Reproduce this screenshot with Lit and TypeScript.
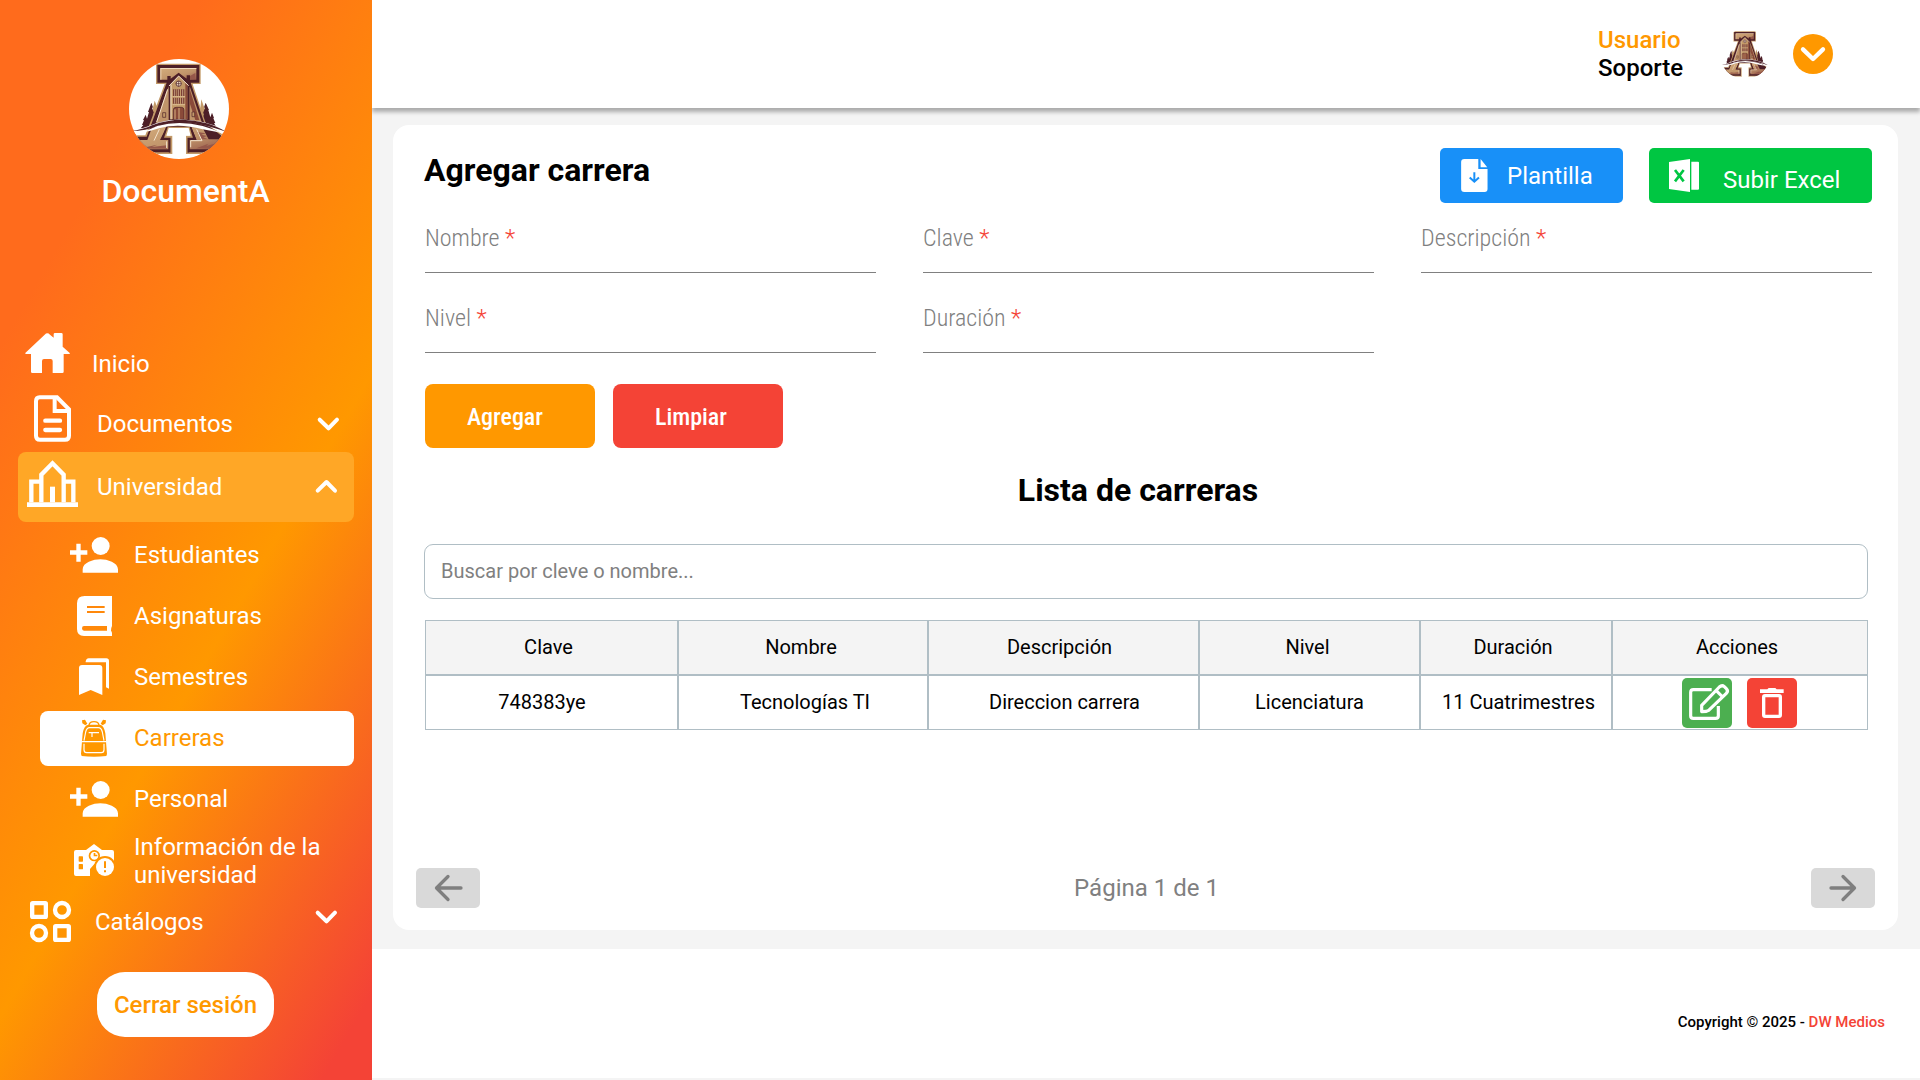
import { LitElement, html, css, svg } from "lit";
import { customElement } from "lit/decorators.js";

const house = svg`<svg class="ico" viewBox="54 78 216 165" width="72" height="55"><path fill="#fff" d="M75 130 134 74Q142 66 150 74L161 83V73q0-4 4-4h19q4 0 4 4V110L210 130q0 2-3 2H191V185q0 4-4 4H158V153q0-6-6-6h-20q-6 0-6 6V189H97q-4 0-4-4V132H78Z"/></svg>`;
const doc = svg`<svg class="ico" viewBox="54 261 216 165" width="72" height="55"><g fill="none" stroke="#fff" stroke-width="12"><path d="M119 262H171L207 298V377q0 12-12 12H120q-12 0-12-12V274q0-12 11-12Z"/><path d="M164 262V303H207"/><path stroke-width="13" stroke-linecap="round" d="M136 332H180M136 360H180"/></g></svg>`;
const campus = svg`<svg class="ico" viewBox="54 426 216 210" width="72" height="70"><g fill="none" stroke="#fff" stroke-width="13"><path d="M94 577V515H122M220 577V515H193M124 577V494L157.500 460 191 494V577"/><path stroke-width="15" d="M157.500 577V530"/><path stroke-width="14" d="M81 584H234"/></g></svg>`;
const catalog = svg`<svg class="ico" viewBox="54 387 216 198" width="72" height="66"><g fill="none" stroke="#fff" stroke-width="13"><rect x="96.500" y="429.500" width="41" height="41" rx="2"/><circle cx="186" cy="450" r="21"/><circle cx="117" cy="519" r="21"/><rect x="165.500" y="498.500" width="41" height="41" rx="2"/></g></svg>`;
const addUser = svg`<svg class="ico" viewBox="198 24 180 165" width="60" height="55"><g fill="#fff"><circle cx="302" cy="78" r="27"/><path d="M248 158V148C248 128 280 118 301 118S354 128 354 148V158ZM229 71h13v20h20v13h-20v21h-13v-21h-19v-13h19Z"/></g></svg>`;
const book = svg`<svg class="ico" viewBox="198 207 180 165" width="60" height="55"><path fill="#fff" fill-rule="evenodd" d="M254 228H336V318q-4 8-3 14q3 4 3 8v8H252q-21 0-21-21V250q0-22 23-22ZM261 258v6h53v-6ZM261 273v6h53v-6ZM321 318H252q-6 0-6 7t6 7H321Z"/></svg>`;
const bookmarks = svg`<svg class="ico" viewBox="198 390 180 165" width="60" height="55"><path fill="#fff" d="M237 444q0-9 9-9h52q9 0 9 9v81l-35-15-35 15ZM257 424q2-9 9-9h53q8 0 8 8v83l-9-4V427H257Z"/></svg>`;
const backpack = svg`<svg class="ico" viewBox="198 573 180 165" width="60" height="55"><path fill="#ff9800" d="M248 640q4-24 17-26h35q12 2 16 26l5 62-2 6q-37 5-74 0l-2-6ZM246 601l9-2 7 12-6 5-9-6ZM318 601l-9-2-7 12 6 5 9-6Z"/><path d="M267 616q1-11 15-11t15 11" fill="none" stroke="#ff9800" stroke-width="4"/><g fill="none" stroke="#fff" stroke-width="3.500"><path d="M252 662 257 636q3-13 12-13h26q9 0 12 13L312 662M246 665h72M252 671v18q0 9 8 9h44q8 0 8-9v-18M266 638h31M276 640v11"/></g></svg>`;
const schoolInfo = svg`<svg class="ico" viewBox="198 219 180 168" width="60" height="56"><mask id="m" maskUnits="userSpaceOnUse" x="215" y="245" width="135" height="110"><path fill="#fff" d="M228 270H258L282 252 306 270H336q6 0 6 6V348H228q-6 0-6-6V276q0-6 6-6Z"/><g fill="#000"><circle cx="283" cy="287" r="17"/><rect x="236" y="289" width="13" height="16" rx="2"/><rect x="236" y="312" width="13" height="16" rx="2"/><circle cx="315" cy="321" r="33"/><path d="M270 348V327L283 312H300V350ZM300 330H345V350H300Z"/></g><path fill="#fff" fill-rule="evenodd" d="M283 275a12 12 0 1 0 .1 0ZM281 279v10h11v-5h-6v-5Z"/><circle cx="315" cy="321" r="27" fill="#fff"/><path stroke="#000" stroke-width="6" d="M315 304V324M315 331V337"/></mask><rect x="215" y="245" width="135" height="110" fill="#fff" mask="url(#m)"/></svg>`;
const chevron = (up: boolean) => svg`<svg class="chev" viewBox="0 0 26 26" width="26" height="26"><path fill="none" stroke="#fff" stroke-width="4" stroke-linecap="round" stroke-linejoin="round" d="${up ? "M3.700 16.700 12.500 8 21 16.700" : "M3.700 8.700 12.500 17.300 21 8.700"}"/></svg>`;

const emblem = (size: number, disc: boolean) => svg`<svg class="emblem" viewBox="147 57 300 300" width=${size} height=${size}>
  <defs>
    <clipPath id="c${size}"><circle cx="297" cy="207" r="150"/></clipPath>
    <linearGradient id="g${size}" x1="0" x2="1" y1="0" y2="1"><stop offset="0" stop-color="#d4ac7c"/><stop offset=".6" stop-color="#c0946a"/><stop offset="1" stop-color="#96584a"/></linearGradient>
  </defs>
  <g clip-path="url(#c${size})">
    ${disc ? svg`<rect x="147" y="57" width="300" height="300" fill="#fff"/>` : ""}
    <g fill="#c39a69"><path d="M224 182l8 20 8 60h-22l-4-40ZM364 178l7 20 8 20v36h-24Z"/></g>
    <path fill="#4d1f27" d="M214 188l5 14-3 2 6 16-3 1 6 20-2 24H182l8-10-4 0 6-14-3-1 8-16 4 12 6-20-3 0ZM377 188l-5 14 3 2-6 16 3 1-6 20 4 22H410l-8-14 4 0-6-14 2-1-6-16-5 14-6-22 2 0Z"/>
    <path fill="#c39a69" d="M228 71H362V132H338L378 252 432 286V342H316V286H326L318 262H276L268 286H279V342H160V286H196L254 132H228Z"/>
    <path fill="#4d1f27" d="M232 75H358V128H332L372 246 428 290V337H320V290H332L322 262H272L262 290H275V337H166V290H200L260 128H232Z"/>
    <path fill="url(#g${size})" d="M241 84H349V119H241Z"/>
    <path fill="#f0d8b8" d="M241 84H349V87H244V119H241Z"/>
    <path fill="#96584a" d="M314 117l32-18v18ZM274 117l14-8 18 8Z"/>
    <path fill="#c0946a" d="M258 158 268 136V240L228 250ZM328 136 365 246 328 240Z"/>
    <path fill="#8a4a39" d="M330 150 358 240 346 240 330 192Z"/>
    <path fill="none" stroke="#f4e3cc" stroke-width="3" d="M263 148 230 246"/>
    <path fill="#4d1f27" d="M262 124V108h10v8L296 98 320 116V106h10v22l2 16-4-4V242H266V138l-6 6Z"/>
    <path fill="#c39a69" d="M271 134 296 108 322 134V238H271Z"/>
    <path fill="#8a4a39" d="M316 129 322 134V238H316Z"/>
    <path fill="none" stroke="#f4e3cc" stroke-width="3" d="M267 138 296 108 326 137M273 134V238"/>
    <circle cx="296" cy="131" r="8" fill="#f4e3cc" stroke="#4d1f27" stroke-width="2.500"/><path stroke="#4d1f27" stroke-width="2" d="M288 131H304M296 123V139"/>
    <path fill="#7b3f35" d="M279 148h9v20h-9ZM290 148h10v20h-10ZM303 148h10v20h-10ZM279 173h9v18h-9ZM290 173h10v18h-10ZM303 173h10v18h-10Z"/>
    <path stroke="#e8cda6" stroke-width="2" d="M277 170H315M277 194H315M284 148V168M295 148V168M308 148V168M284 173V191M295 173V191M308 173V191"/>
    <path fill="#8a4a39" stroke="#4d1f27" stroke-width="2" d="M280 238V210q0-8 8-8h16q8 0 8 8V238Z"/><path stroke="#d8b183" stroke-width="3" d="M285 208V238M297 204V238"/>
    <path fill="#c39a69" stroke="#4d1f27" stroke-width="2" d="M248 218h9v14h-9ZM336 216h8v14h-8Z"/>
    <path fill="url(#g${size})" d="M214 268 262 256 240 300H265V328H180L172 300H202ZM334 262 366 260 386 298H424V328H329V300H350Z"/>
    <path fill="#96584a" d="M196 322l36-8-16 7 44-5v10h-60ZM352 276l26 4-14 4 18 4-12 4 14 6H364ZM349 325l36-14-6 7 34-9-24 17Z"/>
    <path fill="#4d1f27" stroke="#4d1f27" stroke-width="17" d="M266 264H326L336 290H319V329H275V290H256Z"/>
    <path fill="#fff" stroke="#c39a69" stroke-width="7" d="M266 264H326L334 290H319V338H275V290H257Z"/>
    <path fill="#fff" d="M266 264H326L332 287H318V352H277V287H259Z"/>
    <path fill="none" stroke="#f4e3cc" stroke-width="3" d="M238 268 222 302M350 268 366 302H332V322M260 304V324"/>
    <path fill="#fff" d="M140 292Q200 268 230 258 297 234 375 256 410 266 450 292L450 276Q410 256 372 247 297 230 232 248 200 262 140 278Z"/>
    <path fill="#4d1f27" d="M150 274Q190 268 216 256 297 226 380 250 408 258 440 276 400 262 372 256 297 236 232 258 200 272 150 274Z"/>
    <path fill="#fff" d="M178 278Q208 270 232 258 297 240 368 258 396 266 424 278 396 274 368 268 297 248 240 264 212 274 178 278Z"/>
  </g></svg>`;

const fields = ["Nombre", "Clave", "Descripción", "Nivel", "Duración"];
const heads = ["Clave", "Nombre", "Descripción", "Nivel", "Duración", "Acciones"];
const record = ["748383ye", "Tecnologías TI", "Direccion carrera", "Licenciatura", "11 Cuatrimestres"];
const subItems = [
  { icon: addUser, text: "Estudiantes", on: false },
  { icon: book, text: "Asignaturas", on: false },
  { icon: bookmarks, text: "Semestres", on: false },
  { icon: backpack, text: "Carreras", on: true },
  { icon: addUser, text: "Personal", on: false },
];

@customElement("app-root")
export class AppRoot extends LitElement {
  static styles = css`
    :host { display: flex; width: 1920px; height: 1080px; overflow: hidden; background: #f4f4f4; font-family: Roboto, "Liberation Sans", sans-serif; font-size: 24px; line-height: 28px; color: #000; }
    * { box-sizing: border-box; }
    svg { display: block; flex: none; overflow: visible; }
    h1, h2 { margin: 0; font-size: 32px; line-height: 38px; font-weight: 700; white-space: nowrap; }
    button { border: 0; padding: 0; font: inherit; color: #fff; text-align: left; }
    aside { width: 372px; flex: none; padding: 59px 18px 0; color: #fff; background: linear-gradient(120deg, #ff6b1c 20%, #ff9800 59%, #f44336 95%); display: flex; flex-direction: column; }
    .brand { width: 335px; display: flex; flex-direction: column; align-items: center; height: 277px; }
    .brand .emblem { margin-right: 13px; }
    .brand .name { margin-top: 13px; font-size: 32px; line-height: 38px; font-weight: 500; }
    .row { display: flex; align-items: center; height: 55px; flex: none; border-radius: 8px; white-space: nowrap; }
    .row .label { flex: 1; }
    .chev { margin-right: 14px; }
    .home { margin-bottom: 6px; }
    .home .label { padding-left: 2px; }
    .docs .label { padding: 0 0 1px 7px; }
    .docs .chev { margin: 0 12px 2px 0; }
    .uni { height: 70px; background: #ffa726; }
    .uni .label { padding-left: 7px; }
    .sub { display: flex; flex-direction: column; gap: 6px; margin: 6px 0 0 22px; }
    .sub .row { padding-left: 26px; }
    .sub .label { padding: 0 0 1px 8px; }
    .sub .on { background: #fff; color: #ff9800; }
    .sub .tall { height: 56px; }
    .sub .tall .label { padding-bottom: 0; }
    .cat { height: 66px; }
    .cat .label { padding-left: 5px; }
    .cat .chev { margin-bottom: 10px; }
    .logout { width: 177px; height: 65px; margin: 17px 0 0 79px; border-radius: 28px; background: #fff; color: #ff9800; font-weight: 500; text-align: center; }
    .page { flex: 1; display: flex; flex-direction: column; min-width: 0; }
    header { height: 108px; flex: none; background: #fff; box-shadow: 0 4px 4px rgba(0, 0, 0, 0.3); display: flex; align-items: center; justify-content: flex-end; padding-right: 87px; clip-path: inset(0 0 -12px 0); }
    .user { width: 122px; font-weight: 500; }
    .accent { color: #ff9800; }
    .caret { margin-left: 23px; }
    main { height: 841px; flex: none; padding: 17px 22px 19px 21px; }
    .card { height: 805px; border-radius: 16px; background: #fff; padding: 23px 26px 0 32px; display: flex; flex-direction: column; }
    .top { display: flex; height: 55px; }
    .top h1 { flex: 1; padding-top: 3px; margin-left: -1px; }
    .top button { height: 55px; border-radius: 5px; display: flex; }
    .top .template { width: 183px; background: #1890f8; padding: 14px 0 0 21px; gap: 19px; }
    .template svg { margin-top: -3px; }
    .top .excel { width: 223px; margin-left: 26px; background: #00c642; padding: 18px 0 0 20px; gap: 24px; }
    .excel svg { margin-top: -7px; }
    .form { display: grid; grid-template-columns: repeat(3, 451px); column-gap: 47px; row-gap: 31px; margin-top: 21px; }
    .field { height: 49px; border-bottom: 1px solid #808080; color: #808080; font-family: "Roboto Condensed", Roboto, sans-serif; font-stretch: 75%; font-weight: 300; }
    .req { color: #f44336; }
    .actions { display: flex; gap: 18px; margin-top: 31px; }
    .actions button { width: 170px; height: 64px; padding: 2px 0 0 42px; border-radius: 8px; background: #ff9800; font-family: "Roboto Condensed", Roboto, sans-serif; font-stretch: 75%; font-weight: 500; }
    .actions .clear { background: #f44336; }
    h2 { margin-top: 23px; text-align: center; padding-right: 21px; }
    .search { height: 55px; margin: 35px 4px 0 -1px; border: 1px solid #b0bec5; border-radius: 9px; padding: 12px 16px; font-size: 20px; color: #808080; }
    .table { width: 1443px; margin-top: 21px; display: grid; grid-template-columns: 253px 250px 271px 221px 192px 256px; grid-auto-rows: 55px; font-size: 20px; border: 0; }
    .cell { border: 1px solid #b0bec5; display: flex; align-items: center; justify-content: center; white-space: nowrap; padding-bottom: 1px; }
    .th { background: #f4f4f4; padding-right: 6px; }
    .th:nth-child(3) { padding-right: 8px; }
    .th:nth-child(4), .th:nth-child(2) { padding-right: 4px; }
    .cell:nth-child(7) { padding-right: 19px; }
    .cell:nth-child(8) { padding-left: 4px; }
    .cell:nth-child(9) { padding-left: 2px; }
    .cell:nth-child(11) { padding-left: 5px; }
    .ops { gap: 15px; padding: 0 1px 0 0; }
    .ops svg { border-radius: 5px; background: #4caf50; }
    .ops svg + svg { background: #f44336; }
    .pager { display: flex; align-items: center; justify-content: space-between; height: 40px; margin: 138px -3px 0 -9px; color: #808080; }
    .pager span { padding-left: 2px; }
    .pager svg { background: #d9d9d9; border-radius: 5px; }
    footer { height: 129px; background: #fff; padding: 63px 35px 0; text-align: right; font-size: 15px; line-height: 20px; font-weight: 500; }
  `;

  render() {
    return html`
      <aside>
        <div class="brand">${emblem(100, true)}<div class="name">DocumentA</div></div>
        <div class="row home">${house}<span class="label">Inicio</span></div>
        <div class="row docs">${doc}<span class="label">Documentos</span>${chevron(false)}</div>
        <div class="row uni">${campus}<span class="label">Universidad</span>${chevron(true)}</div>
        <nav class="sub">
          ${subItems.map((i) => html`<div class="row ${i.on ? "on" : ""}">${i.icon}<span class="label">${i.text}</span></div>`)}
          <div class="row tall">${schoolInfo}<span class="label">Información de la<br />universidad</span></div>
        </nav>
        <div class="row cat">${catalog}<span class="label">Catálogos</span>${chevron(false)}</div>
        <button class="logout">Cerrar sesión</button>
      </aside>
      <div class="page">
        <header>
          <div class="user"><div class="accent">Usuario</div><div>Soporte</div></div>
          ${emblem(50, false)}
          <svg class="caret" viewBox="699 102 120 120" width="40" height="40"><circle cx="759" cy="162" r="60" fill="#ff9800"/><path d="M729 148 759 177 789 148" fill="none" stroke="#fff" stroke-width="13" stroke-linecap="round" stroke-linejoin="round"/></svg>
        </header>
        <main>
          <div class="card">
            <div class="top">
              <h1>Agregar carrera</h1>
              <button class="template">
                <svg viewBox="183 57 81 100" width="27" height="33"><path fill="#fff" d="M193 57H235V87H263V148q0 9-9 9H193q-10 0-10-9V66q0-9 10-9ZM242 57 262 82H242Z"/><path d="M223 97V126M209 113l14 13 14-13" fill="none" stroke="#1890f8" stroke-width="6"/></svg>
                <span>Plantilla</span>
              </button>
              <button class="excel">
                <svg viewBox="327 478 90 99" width="30" height="33"><path fill="#fff" d="M327 487 390 478V577L327 568ZM394 486H414q3 0 3 3V567q0 3-3 3H394Z"/><path d="M345 511 371 545M371 511 345 545" stroke="#00c642" stroke-width="8"/></svg>
                <span>Subir Excel</span>
              </button>
            </div>
            <div class="form">${fields.map((f) => html`<div class="field">${f} <span class="req">*</span></div>`)}</div>
            <div class="actions"><button>Agregar</button><button class="clear">Limpiar</button></div>
            <h2>Lista de carreras</h2>
            <div class="search">Buscar por cleve o nombre...</div>
            <div class="table">
              ${heads.map((h) => html`<div class="cell th">${h}</div>`)}
              ${record.map((r) => html`<div class="cell">${r}</div>`)}
              <div class="cell ops">
                <svg viewBox="846 234 150 150" width="50" height="50"><g fill="none" stroke="#fff" stroke-width="9.500" stroke-linejoin="round"><path d="M935 269H880q-8 0-8 8V348q0 7 8 7H947q8 0 8-7V318"/><path d="M905 335V316L958 261Q966 254 973 260L979 266Q986 273 979 280L926 331 919 334ZM948 271 968 291"/></g></svg>
                <svg viewBox="1041 234 150 150" width="50" height="50"><path fill="#fff" d="M1080 268h22l4-4h20l4 4h21v11h-71Z"/><rect x="1091" y="287" width="50" height="62" rx="4" fill="none" stroke="#fff" stroke-width="10"/></svg>
              </div>
            </div>
            <div class="pager">
              <svg viewBox="0 0 64 40" width="64" height="40"><path d="M45 20H20.500M32 8.500 20.500 20 32 31.500" fill="none" stroke="#7f7f7f" stroke-width="3.300" stroke-linecap="round" stroke-linejoin="round"/></svg>
              <span>Página 1 de 1</span>
              <svg viewBox="0 0 64 40" width="64" height="40"><path d="M20 20H43.500M32 8.500 43.500 20 32 31.500" fill="none" stroke="#7f7f7f" stroke-width="3.300" stroke-linecap="round" stroke-linejoin="round"/></svg>
            </div>
          </div>
        </main>
        <footer>Copyright © 2025 - <span class="req">DW Medios</span></footer>
      </div>
    `;
  }
}
